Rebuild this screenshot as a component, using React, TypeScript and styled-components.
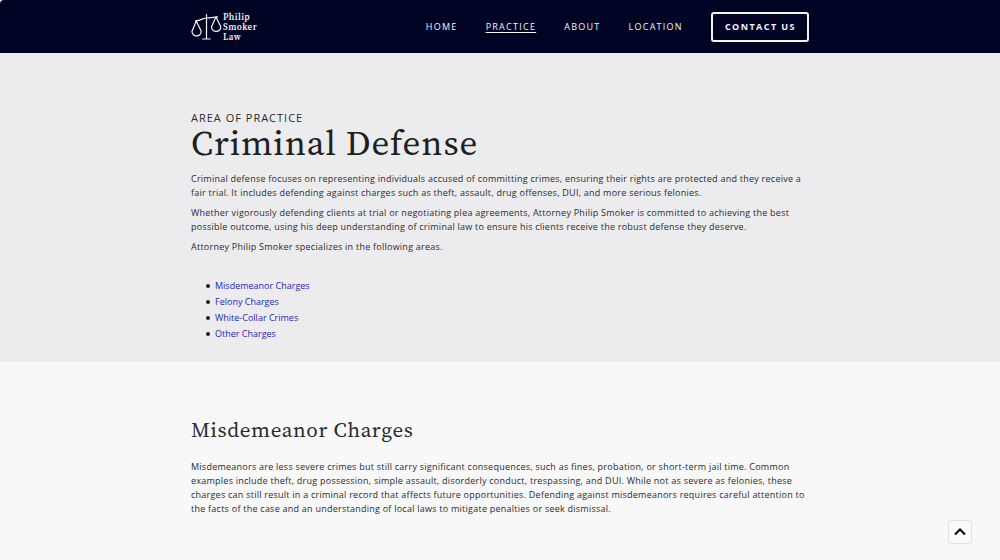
import React from "react";
import styled, { createGlobalStyle } from "styled-components";

const sans = '"Open Sans", "Noto Sans", sans-serif';
const serif = '"Source Serif 4", "Liberation Serif", serif';

const GlobalStyle = createGlobalStyle`
  *, *::before, *::after { box-sizing: border-box; }
  html { background: #f8f8f8; }
  body {
    margin: 0;
    font-family: ${sans};
    font-size: 9px;
    line-height: 14px;
    color: #2b2b2e;
  }
  h1, h2, p, ul { margin: 0; }
`;

const Container = styled.div`
  width: 100%;
  max-width: 666px;
  margin: 0 auto;
  padding: 0 24px;
`;

const Header = styled.header`
  background: #000424;
  border-top-left-radius: 4px;
  padding: 12px 0 11px;
`;

const HeaderRow = styled(Container)`
  display: flex;
  align-items: center;
  justify-content: space-between;
`;

const Brand = styled.a`
  display: flex;
  align-items: center;
  gap: 1px;
  color: #f4f4f8;
  text-decoration: none;
`;

const BrandName = styled.span`
  font: 600 9px/10px ${serif};
  letter-spacing: 0.05em;
`;

const Nav = styled.nav`
  display: flex;
  align-items: center;
  gap: 28px;
`;

const NavLink = styled.a<{ $active?: boolean }>`
  color: #f4f4f8;
  font-weight: 500;
  letter-spacing: 0.14em;
  text-transform: uppercase;
  text-underline-offset: 2px;
  text-decoration: ${(p) => (p.$active ? "underline" : "none")};
`;

const ContactButton = styled.button`
  padding: 6px 11px 6px 12px;
  border: 2px solid #f4f4f8;
  border-radius: 3px;
  background: transparent;
  color: #f4f4f8;
  font: 700 9px/14px ${sans};
  letter-spacing: 0.16em;
  text-transform: uppercase;
`;

const Intro = styled.section`
  background: #ececee;
  padding: 57px 0 20px;
`;

const Eyebrow = styled.p`
  font-size: 11px;
  line-height: 16px;
  letter-spacing: 1px;
  text-transform: uppercase;
`;

const Title = styled.h1`
  margin-bottom: 12px;
  font: 400 35px/34px ${serif};
  letter-spacing: 0.025em;
  color: #1f1f22;
`;

const Paragraph = styled.p`
  letter-spacing: 0.027em;

  & + & {
    margin-top: 6px;
  }
`;

const AreaList = styled.ul`
  margin-top: 24px;
  padding-left: 15px;
  line-height: 16px;
  list-style: none;
`;

const AreaItem = styled.li`
  display: flex;
  align-items: center;
  gap: 5px;

  &::before {
    content: "";
    width: 4px;
    height: 4px;
    border-radius: 50%;
    background: #1f1f22;
  }
`;

const AreaLink = styled.a`
  color: #2a1fb8;
  text-decoration: none;
`;

const Detail = styled.section`
  background: #f8f8f8;
  padding: 55px 0 40px;
`;

const Subtitle = styled.h2`
  margin-bottom: 17px;
  font: 400 21px/26px ${serif};
  letter-spacing: 0.03em;
`;

const TopButton = styled.button`
  position: fixed;
  right: 28px;
  bottom: 16px;
  display: grid;
  place-items: center;
  width: 24px;
  height: 24px;
  padding: 0;
  border: 1px solid #e2e2e4;
  border-radius: 2px;
  background: #fafafa;
  color: #000424;
`;

const areas = [
  { id: "misdemeanor", label: "Misdemeanor Charges" },
  { id: "felony", label: "Felony Charges" },
  { id: "white-collar", label: "White-Collar Crimes" },
  { id: "other", label: "Other Charges" },
];

function ScalesIcon() {
  return (
    <svg width="31" height="28" viewBox="0 0 31 28" fill="none" stroke="currentColor" strokeWidth="1.2" strokeLinecap="round" strokeLinejoin="round" aria-hidden="true">
      <path d="M15.500 1.500v24.500M11.700 26h7.400M4.500 7.900C10 7.500 12 5.200 15.500 5S22 4.300 26.500 3.800" />
      <path d="M5.300 8L1 18.200C0.800 24.400 10.400 24.400 10.200 18.200Z" />
      <path d="M25 4L20.500 13.800C20.500 20 30 20 29.800 13.800Z" />
    </svg>
  );
}

export default function App() {
  return (
    <>
      <GlobalStyle />
      <Header>
        <HeaderRow>
          <Brand href="#home">
            <ScalesIcon />
            <BrandName>
              Philip
              <br />
              Smoker
              <br />
              Law
            </BrandName>
          </Brand>
          <Nav aria-label="Main">
            <NavLink href="#home">Home</NavLink>
            <NavLink href="#practice" $active aria-current="page">Practice</NavLink>
            <NavLink href="#about">About</NavLink>
            <NavLink href="#location">Location</NavLink>
            <ContactButton type="button">Contact us</ContactButton>
          </Nav>
        </HeaderRow>
      </Header>
      <main>
        <Intro>
          <Container>
            <Eyebrow>Area of practice</Eyebrow>
            <Title>Criminal Defense</Title>
            <Paragraph>
              Criminal defense focuses on representing individuals accused of committing crimes, ensuring their rights are protected and they receive a fair trial. It includes defending against charges such as theft, assault, drug offenses, DUI, and more serious felonies.
            </Paragraph>
            <Paragraph>
              Whether vigorously defending clients at trial or negotiating plea agreements, Attorney Philip Smoker is committed to achieving the best possible outcome, using his deep understanding of criminal law to ensure his clients receive the robust defense they deserve.
            </Paragraph>
            <Paragraph>Attorney Philip Smoker specializes in the following areas.</Paragraph>
            <AreaList>
              {areas.map((area) => (
                <AreaItem key={area.id}>
                  <AreaLink href={`#${area.id}`}>{area.label}</AreaLink>
                </AreaItem>
              ))}
            </AreaList>
          </Container>
        </Intro>
        <Detail id="misdemeanor">
          <Container>
            <Subtitle>Misdemeanor Charges</Subtitle>
            <Paragraph>
              Misdemeanors are less severe crimes but still carry significant consequences, such as fines, probation, or short-term jail time. Common examples include theft, drug possession, simple assault, disorderly conduct, trespassing, and DUI. While not as severe as felonies, these charges can still result in a criminal record that affects future opportunities. Defending against misdemeanors requires careful attention to the facts of the case and an understanding of local laws to mitigate penalties or seek dismissal.
            </Paragraph>
          </Container>
        </Detail>
      </main>
      <TopButton type="button" aria-label="Back to top">
        <svg width="12" height="8" viewBox="0 0 12 8" fill="none" stroke="currentColor" strokeWidth="2" aria-hidden="true">
          <path d="M1 6.500L6 1.500L11 6.500" />
        </svg>
      </TopButton>
    </>
  );
}
